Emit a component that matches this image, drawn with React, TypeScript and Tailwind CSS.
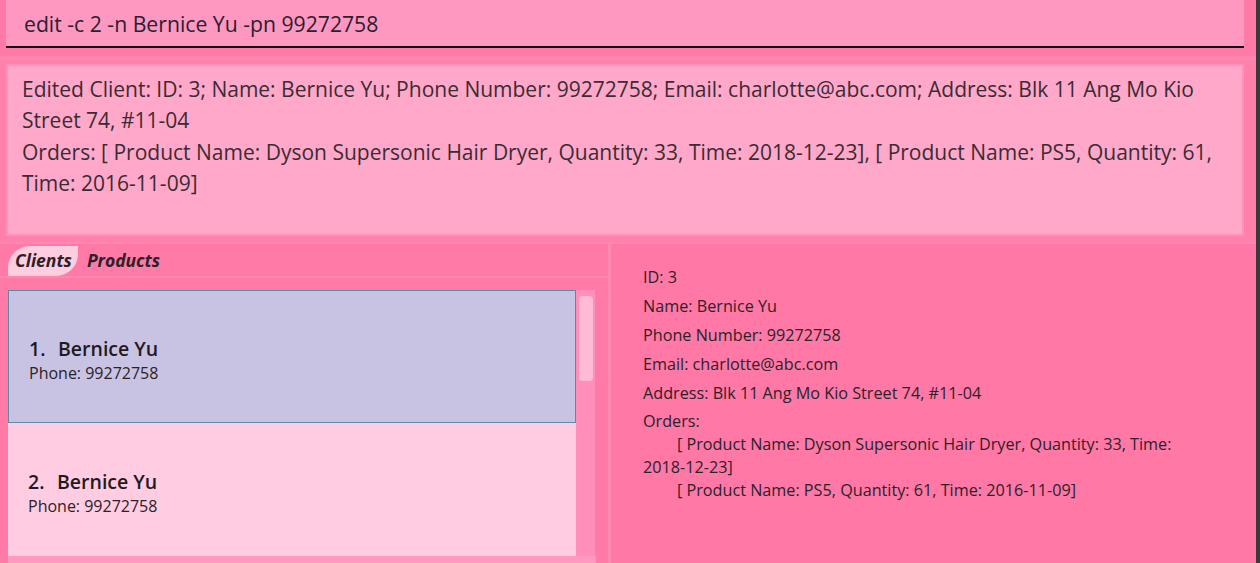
import {ReactNode} from 'react';

type Client = {
  index: number;
  name: string;
  phone: string;
  selected?: boolean;
};

const clients: Client[] = [
  {index: 1, name: 'Bernice Yu', phone: '99272758', selected: true},
  {index: 2, name: 'Bernice Yu', phone: '99272758'},
];

function ClientCard({client}: { client: Client }) {
  return (
    <div
      className={`flex h-[133px] shrink-0 flex-col justify-center pl-[20px] pt-[6px] ${
        client.selected ? 'border border-[#5f8aa3] bg-[#c9c3e3]' : 'bg-[#ffcce1]'
      }`}
    >
      <div className="flex text-[19.5px] font-semibold leading-[25px] text-[#1f1a22]">
        <span className="w-[29px]">{client.index}.</span>
        <span>{client.name}</span>
      </div>
      <div className="mt-[1px] text-[16px] leading-[22px] text-[#2a2228]">Phone: {client.phone}</div>
    </div>
  );
}

function DetailRow({children}: { children: ReactNode }) {
  return <div className="h-[29px] text-[16.2px] leading-[22px]">{children}</div>;
}

function App() {
  return (
    <div
      className="flex h-[563px] w-[1260px] overflow-hidden bg-[#ff7aa7] text-[#2b2229]"
      style={{fontFamily: '"Open Sans", "Noto Sans", sans-serif'}}
    >
      <div className="flex w-[1256px] flex-col">
        {/* command box */}
        <div className="pl-[6px] pr-[12px]">
          <div className="h-[48px] border-b-2 border-[#111] bg-[#ff98c1] pl-[18px] pt-[10px] text-[21.2px] leading-[28px] text-[#2a2030]">
            edit -c 2 -n Bernice Yu -pn 99272758
          </div>
        </div>

        {/* result box */}
        <div className="mt-[8px] border-t-[4px] border-[#ff86b1] bg-[#ff80ab] pb-[6px] pl-[6px] pr-[12px] pt-[4px]">
          <div className="h-[172px] border-2 border-[#ff8fbb] bg-[#ffa8ca] pl-[14px] pr-[18px] pt-[8px] text-[21px] leading-[31.4px] text-[#3a2c33]">
            <div>
              Edited Client: ID: 3; Name: Bernice Yu; Phone Number: 99272758; Email: charlotte@abc.com; Address: Blk 11 Ang Mo Kio Street 74, #11-04
            </div>
            <div>
              Orders: [ Product Name: Dyson Supersonic Hair Dryer, Quantity: 33, Time: 2018-12-23], [ Product Name: PS5, Quantity: 61, Time: 2016-11-09]
            </div>
          </div>
        </div>

        {/* lower split */}
        <div className="flex flex-1 border-t-2 border-[#ff88b3]">
          <div className="flex w-[608px] flex-col">
            <div className="flex h-[34px] items-center gap-[9px] border-b-2 border-[#ff88b3] pl-[8px] pt-[1px]">
              <div
                className="flex h-[30px] items-center rounded-tl-[22px] rounded-br-[22px] bg-[#ffcde0] pl-[7px] pr-[6px] text-[17.5px] font-bold italic text-[#2b2229]">
                Clients
              </div>
              <div className="text-[17.5px] font-bold italic text-[#2b2229]">Products</div>
            </div>
            <div className="mt-[12px] flex h-[266px] pl-[8px] pr-[12px]">
              <div className="flex w-[568px] flex-col overflow-hidden">
                {clients.map((client) => (
                  <ClientCard key={client.index} client={client}/>
                ))}
              </div>
              <div className="w-[19px] bg-[#ff8fba] px-[3px] pt-[6px]">
                <div className="h-[85px] w-[14px] rounded-[4px] bg-[#ffbbd5]"/>
              </div>
            </div>
            <div className="ml-[8px] mr-[12px] flex-1 bg-[#ff99c1]"/>
          </div>
          <div className="w-[3px] bg-[#ff88b3]"/>
          <div className="flex-1 bg-[#ff78a6] pl-[32px] pt-[22px] text-[#2b2229]">
            <DetailRow>ID: 3</DetailRow>
            <DetailRow>Name: Bernice Yu</DetailRow>
            <DetailRow>Phone Number: 99272758</DetailRow>
            <DetailRow>Email: charlotte@abc.com</DetailRow>
            <DetailRow>Address: Blk 11 Ang Mo Kio Street 74, #11-04</DetailRow>
            <div className="-mt-[1px] max-w-[560px] text-[16.2px] leading-[23px]">
              <div>Orders:</div>
              <div>
                <span className="inline-block w-[34px]"/>
                [ Product Name: Dyson Supersonic Hair Dryer, Quantity: 33, Time: <span
                className="whitespace-nowrap">2018-12-23]</span>
              </div>
              <div>
                <span className="inline-block w-[34px]"/>
                [ Product Name: PS5, Quantity: 61, Time: <span className="whitespace-nowrap">2016-11-09]</span>
              </div>
            </div>
          </div>
        </div>
      </div>
      <div className="w-[4px] bg-[#3a3a3c]"/>
    </div>
  );
}

export default App;
